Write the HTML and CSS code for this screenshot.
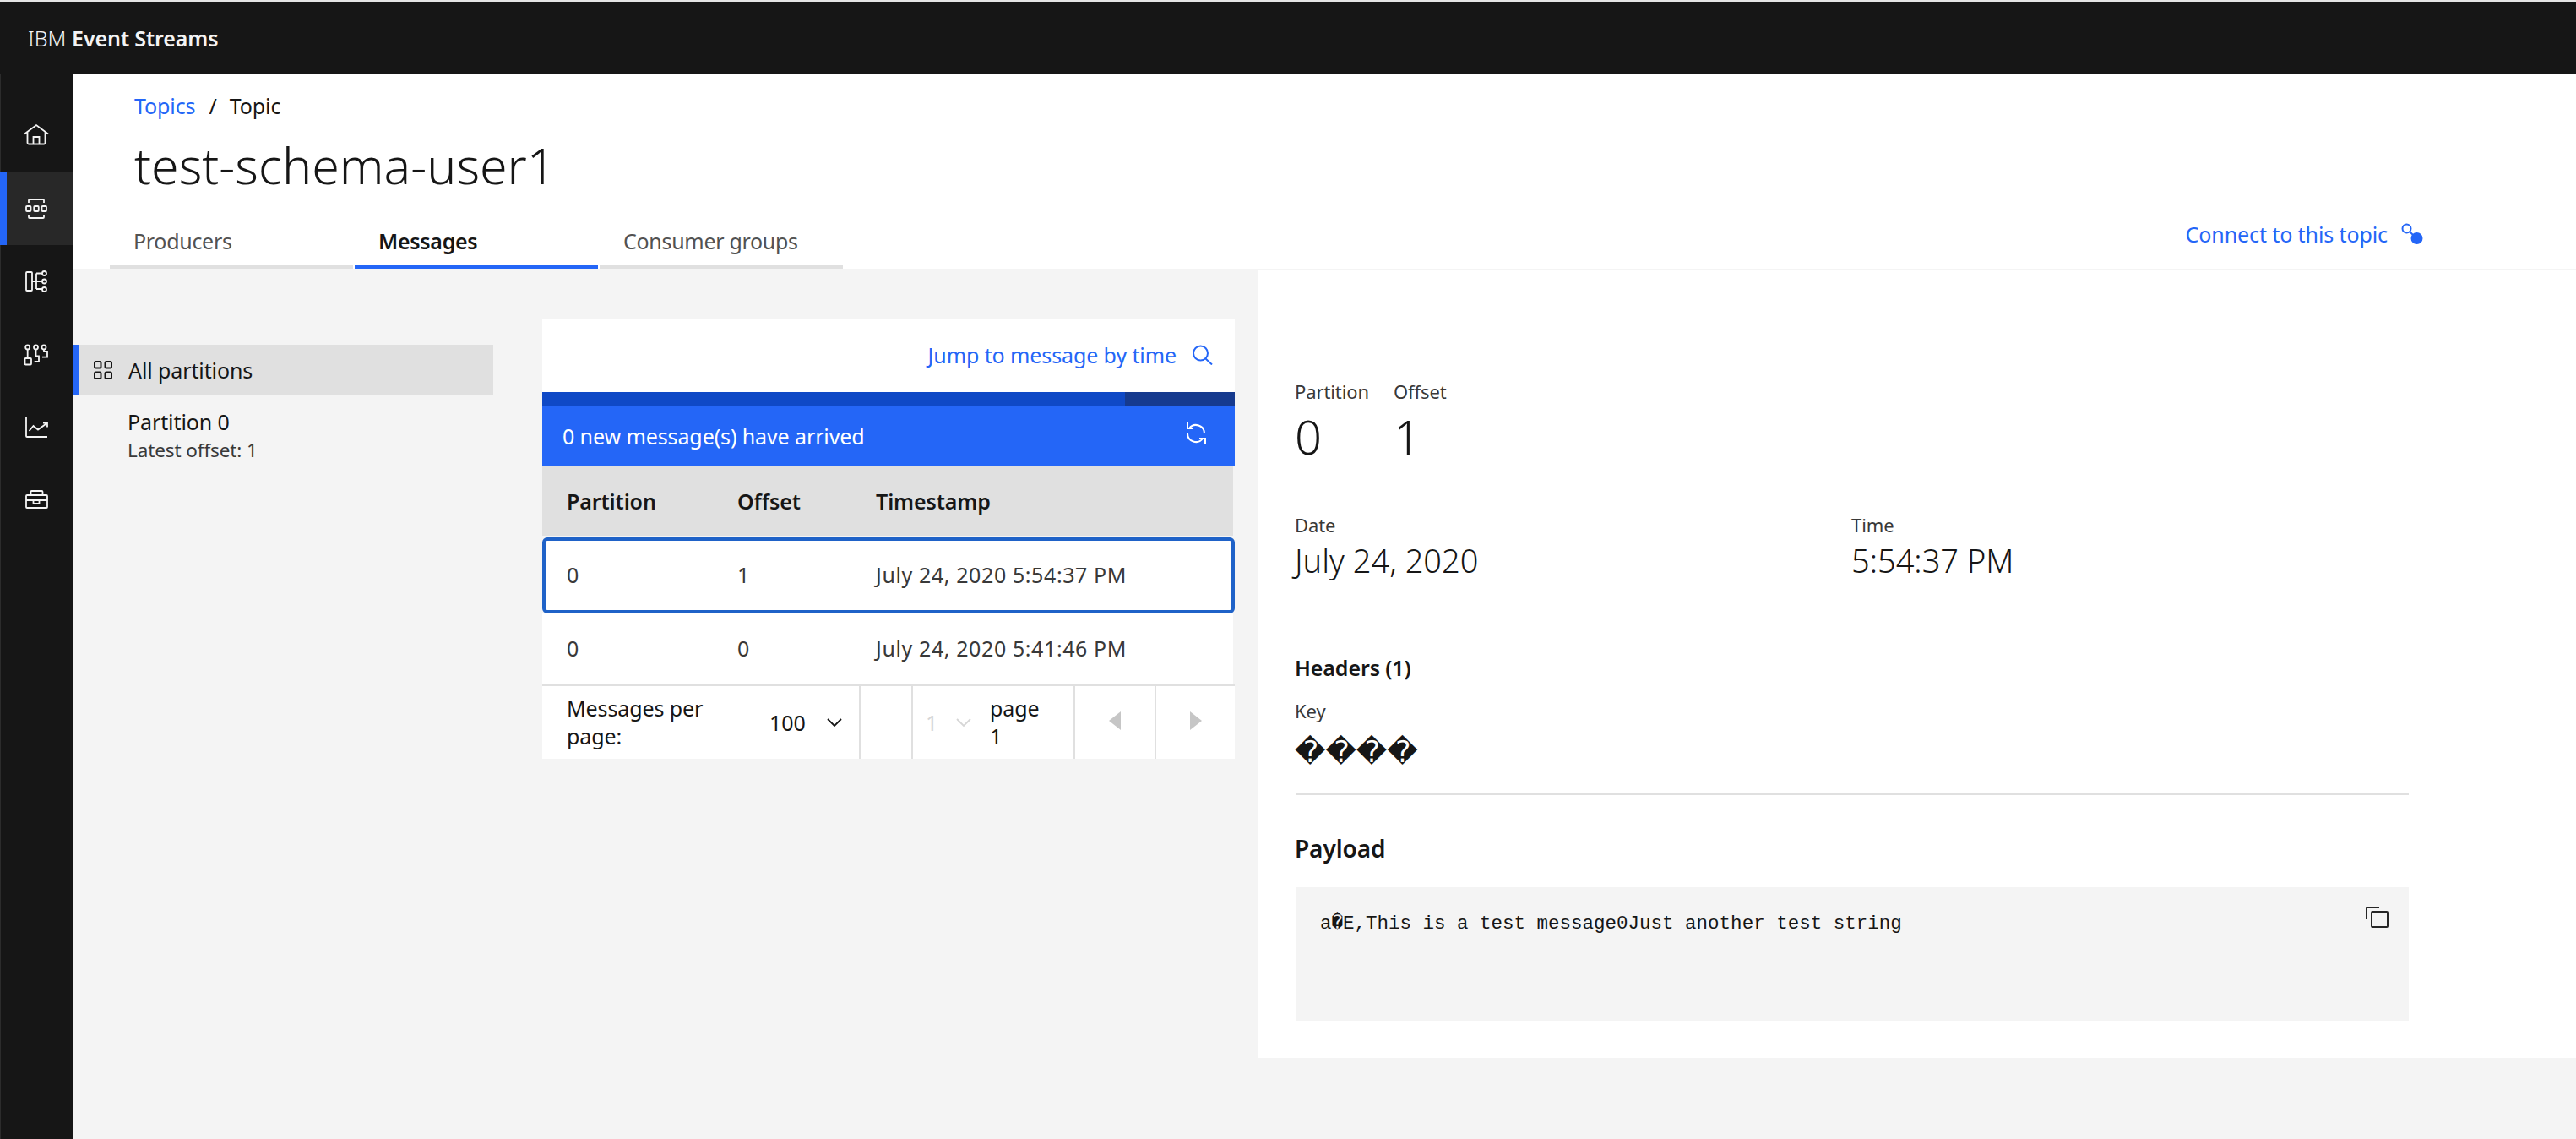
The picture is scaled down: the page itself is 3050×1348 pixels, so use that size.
FILE: index.html
```html
<!DOCTYPE html>
<html lang="en">
<head>
    <meta charset="UTF-8">
    <title>IBM Event Streams</title>
    <link rel="stylesheet" href="styles.css">
</head>
<body>
    <header class="topbar">
        <span class="brand-light">IBM</span> <span class="brand-bold">Event Streams</span>
    </header>
    <div class="shell">
        <nav class="sidenav">
            <a class="nav-item"><svg class="icon" viewBox="0 0 32 32"><path d="M2 13.500 16 3l14 10.500M5.500 11.500V24a1.500 1.500 0 0 0 1.500 1.500h18a1.500 1.500 0 0 0 1.500-1.500V11.500M12.500 25.500V17h7v8.500"/></svg></a>
            <a class="nav-item active"><svg class="icon" viewBox="0 0 32 32"><path d="M7 9V6a1 1 0 0 1 1-1h16a1 1 0 0 1 1 1v3M7 23v3a1 1 0 0 0 1 1h16a1 1 0 0 0 1-1v-3"/><rect x="4" y="13" width="5.500" height="6" rx="1"/><rect x="13.250" y="13" width="5.500" height="6" rx="1"/><rect x="22.500" y="13" width="5.500" height="6" rx="1"/></svg></a>
            <a class="nav-item"><svg class="icon" viewBox="0 0 32 32"><rect x="4" y="5" width="7" height="22" rx="1"/><path d="M16 6.500V25M11 16h12M16 6.500h7M16 25h7"/><circle cx="25.500" cy="6.500" r="2.500"/><circle cx="25.500" cy="16" r="2.500"/><circle cx="25.500" cy="25.500" r="2.500"/></svg></a>
            <a class="nav-item"><svg class="icon" viewBox="0 0 32 32"><circle cx="5.700" cy="8" r="2.500"/><circle cx="15.500" cy="8" r="2.500"/><circle cx="25" cy="8" r="2.500"/><rect x="2.500" y="21" width="7.500" height="7.500" rx="1"/><path d="M5.700 10.500V21M15.500 10.500V18.500H19V25H13.700M25 10.500V13H29V19.700H23"/></svg></a>
            <a class="nav-item"><svg class="icon" viewBox="0 0 32 32"><path d="M4 4v23a1 1 0 0 0 1 1h24M7.500 21l5-6 5.500 4.500L29 11.500M24 11.500h5v5"/></svg></a>
            <a class="nav-item"><svg class="icon" viewBox="0 0 32 32"><rect x="4" y="11" width="25" height="15" rx="1"/><path d="M9.500 11V7a1 1 0 0 1 1-1h12a1 1 0 0 1 1 1v4M4 17h25M12.500 17v4h7v-4"/></svg></a>
        </nav>
        <main class="main">
            <section class="page-head">
                <div class="breadcrumb"><a class="link">Topics</a><span class="crumb-sep">/</span><span>Topic</span></div>
                <h1 class="title">test-schema-user1</h1>
                <div class="tab-row">
                    <div class="tabs">
                        <a class="tab">Producers</a>
                        <a class="tab selected">Messages</a>
                        <a class="tab">Consumer groups</a>
                    </div>
                    <a class="connect link">Connect to this topic
                        <svg class="connect-icon" viewBox="0 0 27 26"><circle cx="6.500" cy="6.500" r="5" fill="none" stroke="#2466f7" stroke-width="2"/><path d="M10 10l6 6" stroke="#2466f7" stroke-width="2"/><circle cx="18.500" cy="18" r="7" fill="#2466f7"/></svg>
                    </a>
                </div>
            </section>
            <section class="content">
                <div class="workspace">
                    <ul class="partitions">
                        <li class="partition current">
                            <svg class="apps-icon" viewBox="0 0 22 22"><rect x="1" y="1" width="7.500" height="7.500" rx="1.500"/><rect x="13.500" y="1" width="7.500" height="7.500" rx="1.500"/><rect x="1" y="13.500" width="7.500" height="7.500" rx="1.500"/><rect x="13.500" y="13.500" width="7.500" height="7.500" rx="1.500"/></svg>
                            All partitions
                        </li>
                        <li class="partition-item">
                            <div class="partition-name">Partition 0</div>
                            <div class="partition-sub">Latest offset: 1</div>
                        </li>
                    </ul>
                    <div class="messages">
                        <div class="jump">
                            <a class="link">Jump to message by time</a>
                            <svg class="search-icon" viewBox="0 0 26 24"><circle cx="10.500" cy="10" r="8.500"/><path d="M16.500 16.500l7.500 7"/></svg>
                        </div>
                        <div class="progress"><div class="progress-end"></div></div>
                        <div class="notice">
                            <span>0 new message(s) have arrived</span>
                            <svg class="refresh-icon" viewBox="0 0 24 26"><path d="M22 13A10 10 0 0 0 4 7M2 0V7H8M2 13A10 10 0 0 0 20 19M23 26V19H16"/></svg>
                        </div>
                        <div class="msg-row msg-head"><span>Partition</span><span>Offset</span><span>Timestamp</span></div>
                        <div class="msg-row msg-picked"><span>0</span><span>1</span><span>July 24, 2020 5:54:37 PM</span></div>
                        <div class="msg-row"><span>0</span><span>0</span><span>July 24, 2020 5:41:46 PM</span></div>
                        <div class="pager">
                            <div class="pager-size">
                                <span class="pager-label">Messages per page:</span>
                                <span class="pager-count">100</span>
                                <svg class="chevron" viewBox="0 0 18 10"><path d="M1 1l8 8 8-8"/></svg>
                            </div>
                            <div class="pager-gap"></div>
                            <div class="pager-page">
                                <span class="pager-disabled">1</span>
                                <svg class="chevron faded" viewBox="0 0 18 10"><path d="M1 1l8 8 8-8"/></svg>
                                <span class="pager-of">page 1</span>
                            </div>
                            <div class="pager-arrow"><span class="tri-left"></span></div>
                            <div class="pager-arrow"><span class="tri-right"></span></div>
                        </div>
                    </div>
                </div>
                <aside class="detail">
                    <div class="pair">
                        <div class="pair-col">
                            <div class="label">Partition</div>
                            <div class="big-value">0</div>
                        </div>
                        <div class="pair-col">
                            <div class="label">Offset</div>
                            <div class="big-value">1</div>
                        </div>
                    </div>
                    <div class="when">
                        <div>
                            <div class="label">Date</div>
                            <div class="mid-value">July 24, 2020</div>
                        </div>
                        <div>
                            <div class="label">Time</div>
                            <div class="mid-value">5:54:37 PM</div>
                        </div>
                    </div>
                    <h3 class="headers-title">Headers (1)</h3>
                    <div class="label key-label">Key</div>
                    <div class="key-value">&#xFFFD;&#xFFFD;&#xFFFD;&#xFFFD;</div>
                    <hr class="rule">
                    <h3 class="payload-title">Payload</h3>
                    <div class="payload">
                        <code class="payload-text">a&#xFFFD;E,This is a test message0Just another test string</code>
                        <svg class="copy-icon" viewBox="0 0 27 25"><path d="M16 1H2a1 1 0 0 0-1 1v13"/><rect x="7" y="6" width="19" height="18" rx="1"/></svg>
                    </div>
                </aside>
            </section>
        </main>
    </div>
</body>
</html>
```

FILE: styles.css
```css
* {
    box-sizing: border-box;
}

html, body {
    height: 100%;
}

body {
    margin: 0;
    display: flex;
    flex-direction: column;
    font-family: "Noto Sans", sans-serif;
    font-size: 25px;
    letter-spacing: -0.1px;
    color: #161616;
    background: #f4f4f4;
    border-top: 2px solid #e4e4e4;
}

.link {
    color: #2466f7;
}

/* top bar */
.topbar {
    height: 86px;
    flex: none;
    display: flex;
    align-items: center;
    gap: 7px;
    padding-left: 33px;
    background: #161616;
    color: #f4f4f4;
    font-size: 25px;
}

.brand-light {
    font-weight: 300;
}

.brand-bold {
    font-weight: 600;
}

.shell {
    flex: 1;
    display: flex;
    min-height: 0;
}

/* side nav */
.sidenav {
    width: 86px;
    flex: none;
    padding-top: 30px;
    background: #161616;
    border-left: 1px solid #2c2c2c;
}

.nav-item {
    height: 86px;
    margin-left: -1px;
    display: flex;
    align-items: center;
    justify-content: center;
}

.nav-item.active {
    background: #282828;
    border-left: 8px solid #2466f7;
    padding-right: 8px;
}

.icon {
    width: 32px;
    height: 32px;
    fill: none;
    stroke: #f4f4f4;
    stroke-width: 1.800;
}

.main {
    flex: 1;
    display: flex;
    flex-direction: column;
    min-width: 0;
}

/* page heading */
.page-head {
    height: 230px;
    flex: none;
    padding-top: 19px;
    background: #fff;
}

.breadcrumb {
    display: flex;
    padding-left: 73px;
    line-height: 36px;
}

.crumb-sep {
    margin: 0 15px 0 16px;
}

.title {
    margin: 20px 0 0;
    padding-left: 73px;
    font-size: 59px;
    font-weight: 300;
    letter-spacing: 0;
    line-height: 64px;
}

.tab-row {
    display: flex;
    justify-content: space-between;
    align-items: flex-start;
    margin-top: 31px;
    padding: 0 180px 0 44px;
}

.tabs {
    display: flex;
}

.tab {
    width: 288px;
    padding: 9px 0 11px 28px;
    line-height: 36px;
    color: #525252;
    letter-spacing: -0.3px;
    border-bottom: 4px solid #e0e0e0;
}

.tab + .tab {
    margin-left: 2px;
}

.tab.selected {
    font-weight: 600;
    color: #161616;
    border-bottom-color: #2466f7;
}

.connect {
    display: flex;
    align-items: center;
    gap: 16px;
    margin-top: 1px;
    line-height: 36px;
}

.connect-icon {
    width: 27px;
    height: 26px;
}

/* content */
.content {
    flex: 1;
    display: flex;
    align-items: flex-start;
}

.workspace {
    width: 1404px;
    flex: none;
    display: flex;
    align-items: flex-start;
}

.partitions {
    width: 498px;
    flex: none;
    margin: 90px 0 0;
    padding: 0;
    list-style: none;
}

.partition.current {
    height: 60px;
    display: flex;
    align-items: center;
    gap: 19px;
    padding-left: 17px;
    background: #e0e0e0;
    border-left: 8px solid #2466f7;
}

.apps-icon {
    width: 22px;
    height: 22px;
    fill: none;
    stroke: #161616;
    stroke-width: 2;
}

.partition-item {
    padding: 12px 0 0 65px;
}

.partition-name {
    line-height: 38px;
}

.partition-sub {
    line-height: 30px;
    font-size: 22.500px;
    color: #393939;
}

/* message table */
.messages {
    width: 820px;
    flex: none;
    margin: 60px 0 0 58px;
}

.jump {
    height: 86px;
    display: flex;
    align-items: center;
    justify-content: flex-end;
    gap: 18px;
    padding-right: 25px;
    padding-bottom: 2px;
    background: #fff;
}

.search-icon {
    width: 26px;
    height: 24px;
    fill: none;
    stroke: #2466f7;
    stroke-width: 2;
}

.progress {
    height: 16px;
    display: flex;
    justify-content: flex-end;
    background: #0f49c6;
}

.progress-end {
    width: 130px;
    background: #163a8e;
}

.notice {
    height: 72px;
    display: flex;
    align-items: center;
    justify-content: space-between;
    padding: 0 34px 0 24px;
    background: #2466f7;
    color: #fff;
}

.refresh-icon {
    width: 24px;
    height: 26px;
    margin-bottom: 6px;
    fill: none;
    stroke: #fff;
    stroke-width: 2;
}

.msg-row {
    display: grid;
    grid-template-columns: 202px 164px 1fr;
    align-items: center;
    width: 818px;
    height: 84px;
    padding-left: 29px;
    padding-bottom: 2px;
    background: #fff;
    color: #393939;
    letter-spacing: 0.6px;
}

.msg-head {
    height: 82px;
    padding-bottom: 0;
    font-weight: 600;
    color: #161616;
    background: #e0e0e0;
    letter-spacing: -0.1px;
}

.msg-picked {
    width: 820px;
    height: 90px;
    margin-top: 2px;
    padding-left: 25px;
    border: 4px solid #1f62c8;
    border-radius: 6px;
}

.pager {
    height: 88px;
    display: flex;
    background: #fff;
    border-top: 2px solid #e0e0e0;
    color: #161616;
}

.pager-size {
    width: 375px;
    display: flex;
    align-items: center;
    padding-left: 29px;
}

.pager-label {
    width: 190px;
    flex: none;
    margin-right: 50px;
    line-height: 33px;
}

.pager-count {
    width: 68px;
    flex: none;
}

.chevron {
    width: 18px;
    height: 10px;
    flex: none;
    fill: none;
    stroke: #161616;
    stroke-width: 1.800;
}

.chevron.faded {
    stroke: #d6d6d6;
}

.pager-gap {
    width: 62px;
    border-left: 2px solid #e0e0e0;
}

.pager-page {
    width: 192px;
    display: flex;
    align-items: center;
    padding-left: 15px;
    border-left: 2px solid #e0e0e0;
}

.pager-disabled {
    width: 36px;
    flex: none;
    color: #d6d6d6;
}

.pager-of {
    width: 60px;
    flex: none;
    margin-left: 22px;
    line-height: 33px;
}

.pager-arrow {
    width: 96px;
    display: flex;
    align-items: center;
    justify-content: center;
    padding-bottom: 4px;
    border-left: 2px solid #e0e0e0;
}

.pager-arrow:last-child {
    width: 95px;
}

.tri-left,
.tri-right {
    width: 0;
    height: 0;
    border-top: 11px solid transparent;
    border-bottom: 11px solid transparent;
}

.tri-left {
    border-right: 14px solid #c6c6c6;
}

.tri-right {
    border-left: 14px solid #c6c6c6;
}

/* detail panel */
.detail {
    flex: 1;
    height: 934px;
    padding: 128px 198px 0 43px;
    background: #fff;
    border-top: 2px solid #f4f4f4;
}

.label {
    line-height: 30px;
    font-size: 22px;
    color: #393939;
}

.pair {
    display: flex;
}

.pair-col {
    width: 117px;
}

.big-value {
    margin-top: 8px;
    font-size: 56px;
    font-weight: 300;
    line-height: 60px;
}

.when {
    display: grid;
    grid-template-columns: 659px 1fr;
    margin-top: 60px;
}

.mid-value {
    margin-top: 5px;
    font-size: 38px;
    font-weight: 300;
    letter-spacing: 0;
    line-height: 44px;
}

.headers-title {
    margin: 88px 0 0;
    font-size: 25px;
    font-weight: 600;
    line-height: 34px;
}

.key-label {
    margin-top: 19px;
}

.key-value {
    margin-top: 12px;
    font-family: "DejaVu Sans", sans-serif;
    font-size: 35.500px;
    letter-spacing: 0;
    line-height: 44px;
}

.rule {
    height: 2px;
    margin: 27px 0 0 1px;
    border: 0;
    background: #e0e0e0;
}

.payload-title {
    margin: 43px 0 0;
    font-size: 28px;
    font-weight: 600;
    line-height: 40px;
}

.payload {
    height: 158px;
    margin: 26px 0 0 1px;
    display: flex;
    justify-content: space-between;
    align-items: flex-start;
    padding: 23px 24px 0 29px;
    background: #f4f4f4;
}

.payload-text {
    margin-top: 5px;
    font-family: "Liberation Mono", "DejaVu Sans Mono", monospace;
    font-size: 22.500px;
    letter-spacing: 0;
    line-height: 30px;
    color: #161616;
}

.copy-icon {
    width: 27px;
    height: 25px;
    fill: none;
    stroke: #262626;
    stroke-width: 2;
}
```
